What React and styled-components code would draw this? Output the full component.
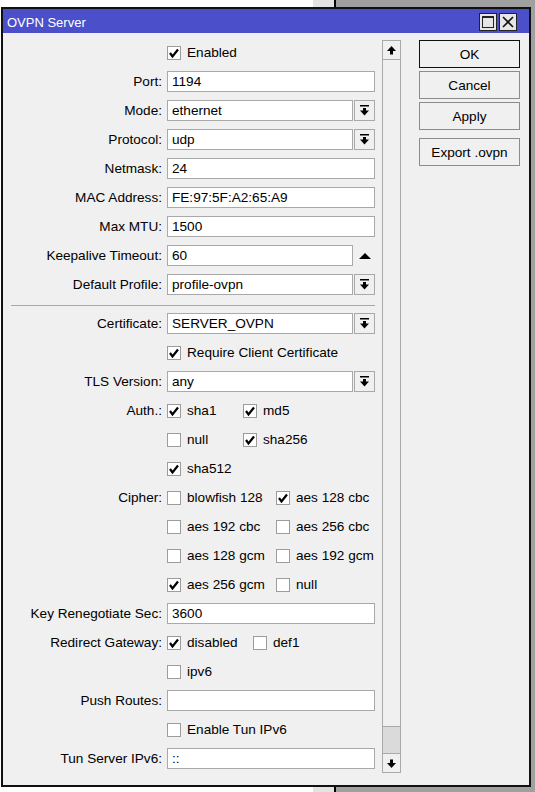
import React from 'react';
import styled, { createGlobalStyle } from 'styled-components';

const GlobalStyle = createGlobalStyle`
  html, body {
    margin: 0;
    padding: 0;
  }
  body {
    min-height: 100vh;
    font-family: "Liberation Sans", Arial, sans-serif;
    font-size: 13.6px;
    color: #000;
    background: linear-gradient(to right, #fff 0 313px, #e3e3e3 313px 334px, #000 334px 336px, #a0a0a0 336px);
  }
`
const Screen = styled.div`
  padding: 7px 0 0 1px;
`
const Window = styled.div`
  width: 530px;
  height: 780px;
  box-sizing: border-box;
  border: 2px solid #111;
  background: #f0f0f0;
  display: flex;
  flex-direction: column;
`
const TitleBar = styled.div`
  height: 24px;
  box-sizing: border-box;
  padding: 2px 12px 0 4px;
  display: flex;
  align-items: center;
  justify-content: space-between;
  background: #4b4fc9;
  color: #fff;
  font-size: 13px;
`
const TitleButtons = styled.div`
  display: flex;
  gap: 2px;
`
const TitleButton = styled.div`
  width: 18px;
  height: 18px;
  box-sizing: border-box;
  border: 1px solid #222;
  background: #e6e6e6;
  display: flex;
  align-items: center;
  justify-content: center;
`
const MaxIcon = styled.div`
  width: 12px;
  height: 12px;
  box-sizing: border-box;
  border: 1px solid #222;
  border-top-width: 2px;
`
const Body = styled.div`
  flex: 1;
  display: flex;
  padding-left: 8px;
`
const Form = styled.div`
  width: 364px;
  padding-top: 5px;
  display: flex;
  flex-direction: column;
`
const Row = styled.div`
  display: grid;
  grid-template-columns: 151px 208px;
  column-gap: 5px;
  align-items: center;
  height: 29px;
`
const Label = styled.div`
  text-align: right;
  white-space: nowrap;
`
const Field = styled.div`
  display: flex;
  align-items: center;
  gap: 1px;
`
const TextBox = styled.div`
  flex: 1;
  height: 21px;
  box-sizing: border-box;
  border: 1px solid #a9a9a9;
  background: #fff;
  padding: 0 4px;
  line-height: 19px;
  white-space: nowrap;
  overflow: hidden;
`
const DropButton = styled.div`
  width: 21px;
  height: 21px;
  box-sizing: border-box;
  border: 1px solid #a9a9a9;
  background: #f0f0f0;
  display: flex;
  align-items: center;
  justify-content: center;
`
const SpinSlot = styled.div`
  width: 21px;
  height: 21px;
  display: flex;
  align-items: center;
  justify-content: center;
`
const Separator = styled.div`
  height: 1px;
  background: #a9a9a9;
  margin: 6px 0 3px;
`
const Check = styled.div`
  display: flex;
  align-items: center;
  gap: 6px;
  width: ${props => props.w ? props.w + 'px' : 'auto'};
  white-space: nowrap;
`
const Box = styled.span`
  width: 14px;
  height: 14px;
  box-sizing: border-box;
  border: 1px solid #9c9c9c;
  background: #fff;
  display: flex;
  align-items: center;
  justify-content: center;
  flex-shrink: 0;
`
const Scrollbar = styled.div`
  width: 19px;
  margin: 7px 0 12px 7px;
  box-sizing: border-box;
  border: 1px solid #a9a9a9;
  display: flex;
  flex-direction: column;
`
const ScrollButton = styled.div`
  height: 18px;
  background: #f0f0f0;
  display: flex;
  align-items: center;
  justify-content: center;
  border-${props => props.top ? 'bottom' : 'top'}: 1px solid #a9a9a9;
`
const Track = styled.div`
  flex: 1;
  display: flex;
  flex-direction: column;
  justify-content: flex-end;
  background: #f0f0f0;
`
const Thumb = styled.div`
  height: 26px;
  background: #dadada;
  border-top: 1px solid #a9a9a9;
`
const Buttons = styled.div`
  width: 101px;
  margin: 7px 0 0 18px;
  display: flex;
  flex-direction: column;
  gap: 3px;
`
const DialogButton = styled.div`
  height: 28px;
  box-sizing: border-box;
  border: 1px solid ${props => props.main ? '#111' : '#8c8c8c'};
  background: #f0f0f0;
  display: flex;
  align-items: center;
  justify-content: center;
  margin-top: ${props => props.gapTop ? '5px' : '0'};
`

const Tick = () => (
  <svg width="12" height="12" viewBox="0 0 12 12">
    <polyline points="2,6 4.5,9.5 10,2.5" fill="none" stroke="#000" strokeWidth="2.2" />
  </svg>
)

const DropArrow = () => (
  <svg width="9" height="11" viewBox="0 0 9 11">
    <rect x="0" y="0" width="9" height="1.5" fill="#000" />
    <rect x="3" y="3" width="3" height="3" fill="#000" />
    <polygon points="0,5.5 9,5.5 4.5,10.5" fill="#000" />
  </svg>
)

const ScrollArrow = ({ up }) => (
  <svg width="9" height="9" viewBox="0 0 9 9" style={{ transform: up ? 'none' : 'rotate(180deg)' }}>
    <polygon points="0,5 9,5 4.5,0" fill="#000" />
    <rect x="3" y="5" width="3" height="3.5" fill="#000" />
  </svg>
)

const CheckItem = ({ on, w, children }) => (
  <Check w={w}>
    <Box>{on && <Tick />}</Box>
    <span>{children}</span>
  </Check>
)

const Input = ({ label, value, drop, spin }) => (
  <Row>
    <Label>{label}</Label>
    <Field>
      <TextBox>{value}</TextBox>
      {drop && <DropButton><DropArrow /></DropButton>}
      {spin && (
        <SpinSlot>
          <svg width="12" height="6" viewBox="0 0 12 6"><polygon points="0,6 12,6 6,0" fill="#000" /></svg>
        </SpinSlot>
      )}
    </Field>
  </Row>
)

const Checks = ({ label, w, items }) => (
  <Row>
    <Label>{label}</Label>
    <Field>
      {items.map((item, i) => (
        <CheckItem key={i} on={item[1]} w={i < items.length - 1 ? w : null}>{item[0]}</CheckItem>
      ))}
    </Field>
  </Row>
)

export default function App() {
  return (
    <>
      <GlobalStyle />
      <Screen>
        <Window>
          <TitleBar>
            <span>OVPN Server</span>
            <TitleButtons>
              <TitleButton><MaxIcon /></TitleButton>
              <TitleButton>
                <svg width="12" height="12" viewBox="0 0 12 12">
                  <path d="M1 1 L11 11 M11 1 L1 11" stroke="#111" strokeWidth="1.6" />
                </svg>
              </TitleButton>
            </TitleButtons>
          </TitleBar>
          <Body>
            <Form>
              <Checks items={[['Enabled', true]]} />
              <Input label="Port:" value="1194" />
              <Input label="Mode:" value="ethernet" drop />
              <Input label="Protocol:" value="udp" drop />
              <Input label="Netmask:" value="24" />
              <Input label="MAC Address:" value="FE:97:5F:A2:65:A9" />
              <Input label="Max MTU:" value="1500" />
              <Input label="Keepalive Timeout:" value="60" spin />
              <Input label="Default Profile:" value="profile-ovpn" drop />
              <Separator />
              <Input label="Certificate:" value="SERVER_OVPN" drop />
              <Checks items={[['Require Client Certificate', true]]} />
              <Input label="TLS Version:" value="any" drop />
              <Checks label="Auth.:" w={75} items={[['sha1', true], ['md5', true]]} />
              <Checks w={75} items={[['null', false], ['sha256', true]]} />
              <Checks items={[['sha512', true]]} />
              <Checks label="Cipher:" w={108} items={[['blowfish 128', false], ['aes 128 cbc', true]]} />
              <Checks w={108} items={[['aes 192 cbc', false], ['aes 256 cbc', false]]} />
              <Checks w={108} items={[['aes 128 gcm', false], ['aes 192 gcm', false]]} />
              <Checks w={108} items={[['aes 256 gcm', true], ['null', false]]} />
              <Input label="Key Renegotiate Sec:" value="3600" />
              <Checks label="Redirect Gateway:" w={85} items={[['disabled', true], ['def1', false]]} />
              <Checks items={[['ipv6', false]]} />
              <Input label="Push Routes:" value="" />
              <Checks items={[['Enable Tun IPv6', false]]} />
              <Input label="Tun Server IPv6:" value="::" />
            </Form>
            <Scrollbar>
              <ScrollButton top><ScrollArrow up /></ScrollButton>
              <Track><Thumb /></Track>
              <ScrollButton><ScrollArrow /></ScrollButton>
            </Scrollbar>
            <Buttons>
              <DialogButton main>OK</DialogButton>
              <DialogButton>Cancel</DialogButton>
              <DialogButton>Apply</DialogButton>
              <DialogButton gapTop>Export .ovpn</DialogButton>
            </Buttons>
          </Body>
        </Window>
      </Screen>
    </>
  );
}
